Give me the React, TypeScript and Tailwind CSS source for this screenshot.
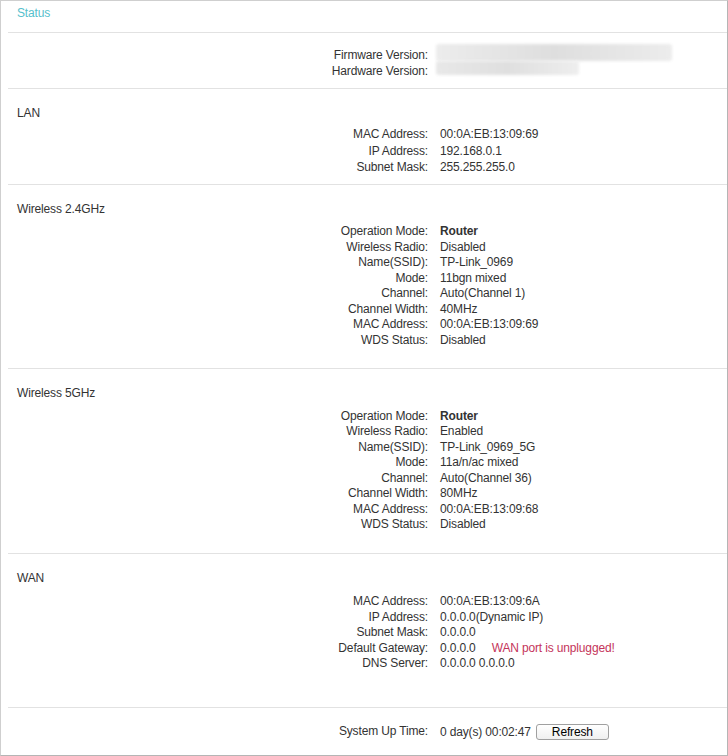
import React from "react";

type Row = { label: string; value: React.ReactNode };

const Sep = () => <div className="h-px ml-[7px] bg-[#e2e2e2]" />;

function Rows({ rows, lh }: { rows: Row[]; lh: string }) {
  return (
    <div>
      {rows.map((r, i) => (
        <div key={i} className={`flex ${lh}`}>
          <div className="w-[427px] text-right whitespace-nowrap">{r.label}</div>
          <div className="pl-[12px] whitespace-nowrap">{r.value}</div>
        </div>
      ))}
    </div>
  );
}

const wl24: Row[] = [
  { label: "Operation Mode:", value: <span className="font-bold">Router</span> },
  { label: "Wireless Radio:", value: "Disabled" },
  { label: "Name(SSID):", value: "TP-Link_0969" },
  { label: "Mode:", value: "11bgn mixed" },
  { label: "Channel:", value: "Auto(Channel 1)" },
  { label: "Channel Width:", value: "40MHz" },
  { label: "MAC Address:", value: "00:0A:EB:13:09:69" },
  { label: "WDS Status:", value: "Disabled" },
];

const wl5: Row[] = [
  { label: "Operation Mode:", value: <span className="font-bold">Router</span> },
  { label: "Wireless Radio:", value: "Enabled" },
  { label: "Name(SSID):", value: "TP-Link_0969_5G" },
  { label: "Mode:", value: "11a/n/ac mixed" },
  { label: "Channel:", value: "Auto(Channel 36)" },
  { label: "Channel Width:", value: "80MHz" },
  { label: "MAC Address:", value: "00:0A:EB:13:09:68" },
  { label: "WDS Status:", value: "Disabled" },
];

const lan: Row[] = [
  { label: "MAC Address:", value: "00:0A:EB:13:09:69" },
  { label: "IP Address:", value: "192.168.0.1" },
  { label: "Subnet Mask:", value: "255.255.255.0" },
];

const wan: Row[] = [
  { label: "MAC Address:", value: "00:0A:EB:13:09:6A" },
  { label: "IP Address:", value: "0.0.0.0(Dynamic IP)" },
  { label: "Subnet Mask:", value: "0.0.0.0" },
  {
    label: "Default Gateway:",
    value: (
      <span>
        0.0.0.0<span className="ml-[16px] text-[#c4345a]">WAN port is unplugged!</span>
      </span>
    ),
  },
  { label: "DNS Server:", value: "0.0.0.0 0.0.0.0" },
];

export default function App() {
  return (
    <div
      className="w-[728px] h-[756px] box-border bg-white border border-[#cfcfcf] border-r-[#b5b5b5] border-b-[#b5b5b5] text-[12px] tracking-[-0.15px] text-[#333] overflow-hidden"
      style={{ fontFamily: '"Liberation Sans", Arial, sans-serif' }}
    >
      {/* header */}
      <div className="h-[31px] pt-[4px] pl-[16px] leading-[16px] text-[#56c0cc]">Status</div>
      <Sep />

      {/* firmware */}
      <div className="pt-[14px] pb-[9px]">
        <div className="flex leading-[16px] h-[16px]">
          <div className="w-[427px] text-right">Firmware Version:</div>
          <div className="pl-[8px]">
            <div className="mt-[-3px] w-[236px] h-[17px] rounded-[3px] bg-gradient-to-r from-[#ececec] via-[#dedede] to-[#ececec] blur-[1.5px]" />
          </div>
        </div>
        <div className="flex leading-[16px] h-[16px]">
          <div className="w-[427px] text-right">Hardware Version:</div>
          <div className="pl-[8px]">
            <div className="mt-[-2px] w-[143px] h-[14px] rounded-[3px] bg-gradient-to-r from-[#e8e8e8] via-[#dfdfdf] to-[#eeeeee] blur-[1.5px]" />
          </div>
        </div>
      </div>
      <Sep />

      {/* LAN */}
      <div className="pt-[16px] pb-[8.5px]">
        <div className="pl-[16px] leading-[16px]">LAN</div>
        <div className="mt-[5px]">
          <Rows rows={lan} lh="leading-[16.5px] h-[16.5px]" />
        </div>
      </div>
      <Sep />

      {/* Wireless 2.4 */}
      <div className="pt-[16px] pb-[20px]">
        <div className="pl-[16px] leading-[16px]">Wireless 2.4GHz</div>
        <div className="mt-[7px]">
          <Rows rows={wl24} lh="leading-[15.5px] h-[15.5px]" />
        </div>
      </div>
      <Sep />

      {/* Wireless 5 */}
      <div className="pt-[16px] pb-[21px]">
        <div className="pl-[16px] leading-[16px]">Wireless 5GHz</div>
        <div className="mt-[8px]">
          <Rows rows={wl5} lh="leading-[15.43px] h-[15.43px]" />
        </div>
      </div>
      <Sep />

      {/* WAN */}
      <div className="pt-[16px] pb-[35.5px]">
        <div className="pl-[16px] leading-[16px]">WAN</div>
        <div className="mt-[8px]">
          <Rows rows={wan} lh="leading-[15.5px] h-[15.5px]" />
        </div>
      </div>
      <Sep />

      {/* System up time */}
      <div className="pt-[15px]">
        <div className="flex items-center h-[18px]">
          <div className="w-[427px] text-right leading-[16px] mt-[-2px]">System Up Time:</div>
          <div className="pl-[12px] leading-[16px] whitespace-nowrap">0 day(s) 00:02:47</div>
          <button className="ml-[5px] w-[73px] h-[16px] box-border border border-[#a0a0a0] rounded-[3px] bg-gradient-to-b from-white to-[#f0f0f0] text-[12px] leading-[14px] text-black">
            Refresh
          </button>
        </div>
      </div>
    </div>
  );
}
